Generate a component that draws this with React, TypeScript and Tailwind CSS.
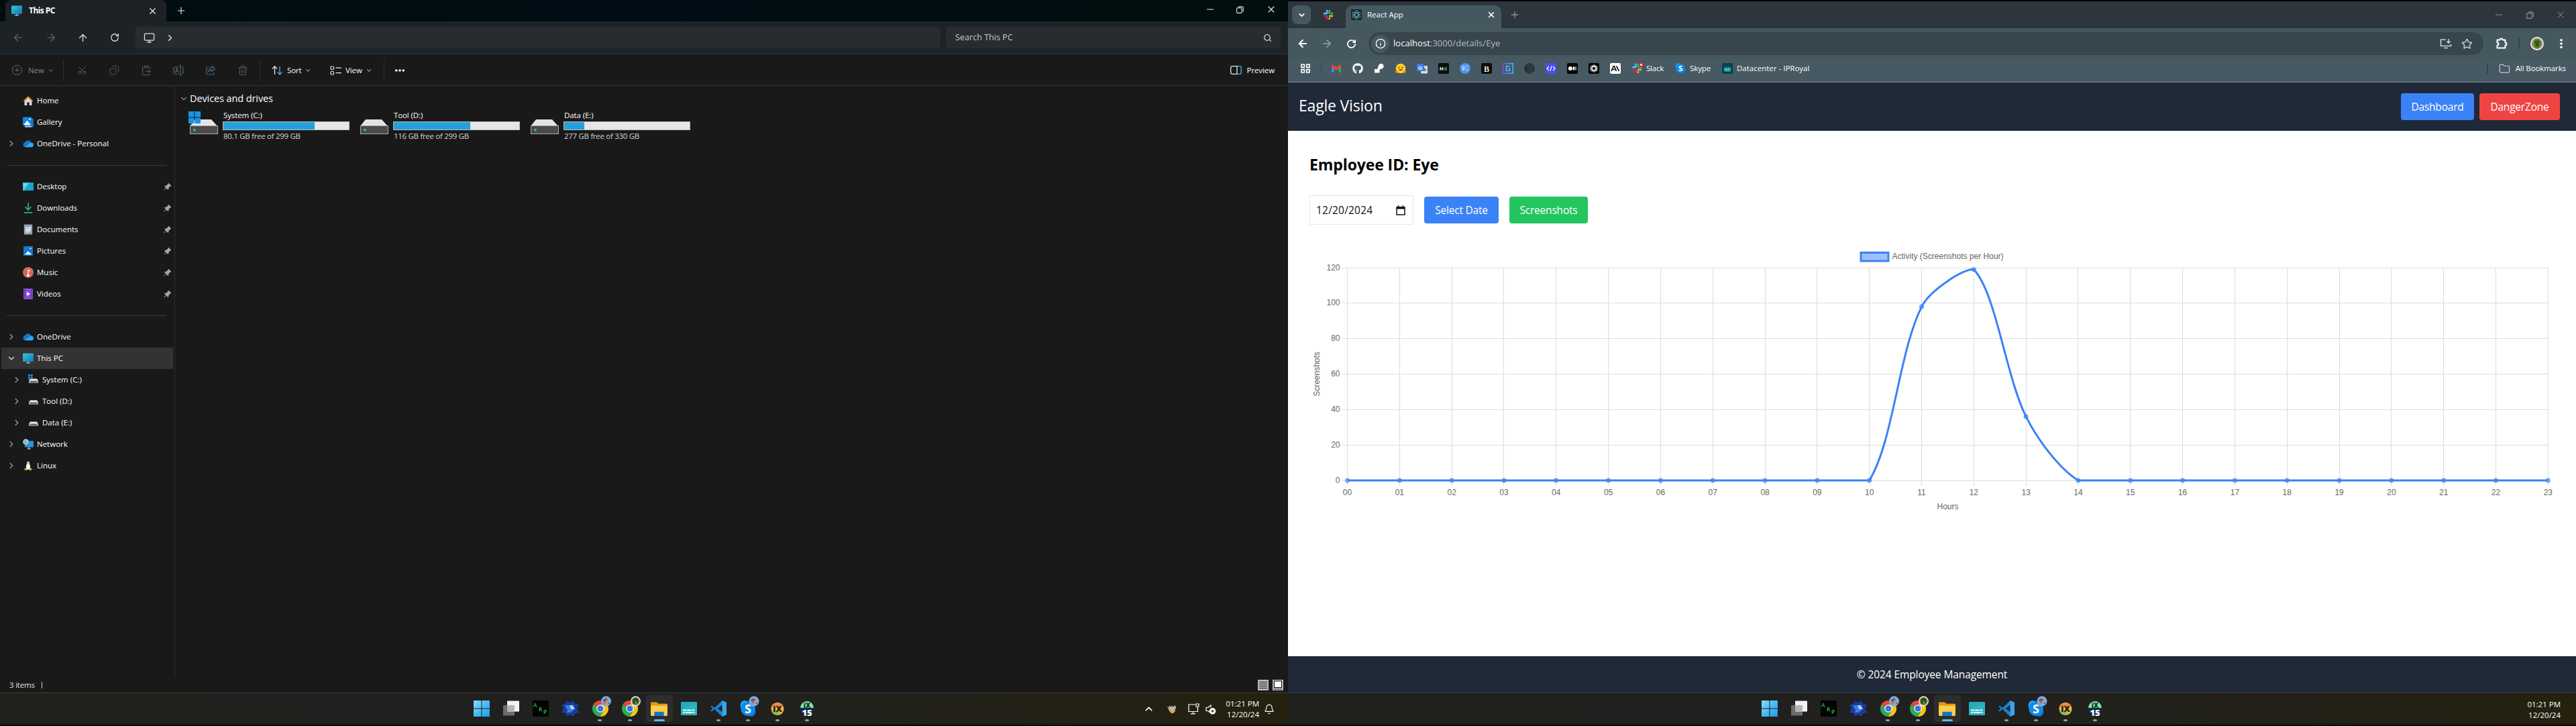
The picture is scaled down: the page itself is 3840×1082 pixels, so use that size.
import React from "react";
import { FaGithub } from "react-icons/fa";
import {
  ArrowLeft, ArrowRight, ArrowUp, RotateCw, Monitor, ChevronRight, ChevronDown, ChevronUp, X, Plus, Minus,
  Scissors, Copy, ClipboardPaste, Trash2, Search, Ellipsis, Star, Folder, Bell,
  EllipsisVertical, CirclePlus, Info,
} from "lucide-react";

type P = { children?: React.ReactNode; className?: string };

const Cell = ({ children, className = "" }: P) => (
  <div className={"flex shrink-0 items-center justify-center " + className}>{children}</div>
);

/* ---------- shared glyphs ---------- */

const RestoreIcon = () => (
  <svg width="11" height="11" viewBox="0 0 11 11" fill="none" stroke="currentColor" strokeWidth="1.1">
    <rect x="0.6" y="2.6" width="7.6" height="7.8" rx="1.4" />
    <path d="M2.8 0.8H8a2.3 2.3 0 0 1 2.3 2.3V8.4" />
  </svg>
);

const MonitorIcon = ({ size = 16 }: { size?: number }) => (
  <svg width={size} height={size} viewBox="0 0 16 16">
    <defs>
      <linearGradient id="mon" x1="0" y1="0" x2="1" y2="1">
        <stop offset="0" stopColor="#37c9d6" />
        <stop offset="1" stopColor="#1273b8" />
      </linearGradient>
    </defs>
    <rect x="0" y="0.5" width="16" height="12.5" rx="0.8" fill="url(#mon)" />
    <path d="M7.2 13h1.6v1.6h2.6v1H4.6v-1h2.6z" fill="#a9d9ea" />
  </svg>
);

const CloudIcon = () => (
  <svg width="16" height="16" viewBox="0 0 16 16">
    <path d="M4 13.2a3.7 3.7 0 0 1-.6-7.3A5 5 0 0 1 12.6 6.6a3.3 3.3 0 0 1 .2 6.6z" fill="#0f7ad0" />
    <path d="M3 13.2l7.5-5.8c2-1 5.3 0 5.3 2.9a3 3 0 0 1-3 2.9z" fill="#35a8ee" />
  </svg>
);

const HomeIcon = () => (
  <svg width="16" height="16" viewBox="0 0 16 16">
    <path d="M2.5 7L8 2l5.5 5v8H9.7v-4.5H6.3V15H2.5z" fill="#d8d8d8" />
    <path d="M0.8 8.3L8 1.2l7.2 7.1-1.3 1.2L8 3.9 2.1 9.5z" fill="#e88a2c" />
  </svg>
);

const GalleryIcon = () => (
  <svg width="16" height="16" viewBox="0 0 16 16">
    <rect x="3" y="2.5" width="13" height="13" rx="1" fill="#1f6fc0" />
    <rect x="0" y="0.5" width="13.5" height="12.5" rx="1" fill="#1287e0" />
    <path d="M1 12.5l5.5-7 5.5 7z" fill="#f2f8ff" />
    <circle cx="10.5" cy="3.6" r="1.2" fill="#fff" />
    <path d="M3 14h10v1.5H3z" fill="#c9e2f8" />
  </svg>
);

const DesktopIcon = () => (
  <svg width="16" height="16" viewBox="0 0 16 16">
    <rect x="0" y="2" width="16" height="12" rx="1" fill="#1aa5cf" />
    <path d="M0 3a1 1 0 0 1 1-1h9L2 14H1a1 1 0 0 1-1-1z" fill="#3fc6e4" />
    <path d="M1.5 4h1.5v1.5H1.5zM1.5 7h1.5v1.5H1.5zM4.5 4H6v1.5H4.5z" fill="#e8fbff" />
  </svg>
);

const DownloadIcon = () => (
  <svg width="16" height="16" viewBox="0 0 16 16" fill="none" stroke="#27b183" strokeWidth="1.7">
    <path d="M8 0v10.5M3.5 6.3L8 10.7l4.5-4.4M2 14.8h12" />
  </svg>
);

const DocIcon = () => (
  <svg width="16" height="16" viewBox="0 0 16 16">
    <rect x="1.8" y="0.5" width="12.4" height="15" rx="0.8" fill="#93a5b8" />
    <path d="M4 5h5v1H4zM4 7h8v1.2H4zM4 9.3h8v1.2H4zM9.5 4H12v2.2H9.5z" fill="#fff" />
    <path d="M4 11.5h6v1H4z" fill="#e3ebf2" />
  </svg>
);

const PictureIcon = () => (
  <svg width="16" height="16" viewBox="0 0 16 16">
    <rect x="1" y="1" width="14" height="14" rx="1" fill="#1878cc" />
    <path d="M2.5 13.5L8 8.2l5.5 5.3z" fill="#e6f4ff" />
    <circle cx="11.5" cy="4.3" r="1.1" fill="#fff" />
  </svg>
);

const MusicIcon = () => (
  <svg width="16" height="16" viewBox="0 0 16 16">
    <circle cx="8" cy="8" r="8" fill="#d0695c" />
    <path d="M7.5 10.8V3.8l3.3.8v1.7l-2-.5v5.2a1.8 1.8 0 1 1-1.3-.2z" fill="#fff" />
  </svg>
);

const VideoIcon = () => (
  <svg width="16" height="16" viewBox="0 0 16 16">
    <rect x="1" y="0" width="14" height="16" rx="1" fill="#8a4fd3" />
    <path d="M2 2h1.5v1.5H2zM2 5.5h1.5V7H2zM2 9h1.5v1.5H2zM2 12.5h1.5V14H2zM12.5 2H14v1.5h-1.5zM12.5 5.5H14V7h-1.5zM12.5 9H14v1.5h-1.5zM12.5 12.5H14V14h-1.5z" fill="#3c1d77" />
    <path d="M6 5l5 3-5 3z" fill="#fff" />
  </svg>
);

const SmallDrive = ({ win = false }: { win?: boolean }) => (
  <svg width="16" height="16" viewBox="0 0 16 16">
    <path d="M3 6.5h10l2 3H1z" fill="#e8e8e8" />
    <rect x="1" y="9.3" width="14" height="3.4" rx="0.5" fill="#b9bcc0" />
    <rect x="2.5" y="10.4" width="11" height="1.3" fill="#3b3b3b" />
    {win && <path d="M0 0h3v3H0zM3.7 0h3v3h-3zM0 3.7h3v3H0zM3.7 3.7h3v3h-3z" fill="#1d8be0" />}
  </svg>
);

const NetworkIcon = () => (
  <svg width="16" height="16" viewBox="0 0 16 16">
    <rect x="3" y="3" width="13" height="9.5" rx="0.8" fill="#2795d3" />
    <path d="M8.5 12.5H10v2h2v1H6.5v-1h2z" fill="#a9d9ea" />
    <circle cx="4.5" cy="4.5" r="4.3" fill="#a9cfe0" />
    <path d="M2 2.5c2 0 2 2 4 1.5M2 6c2-1 3 1 5-.5" stroke="#3b87a8" fill="none" />
  </svg>
);

const LinuxIcon = () => (
  <svg width="16" height="16" viewBox="0 0 16 16">
    <ellipse cx="8" cy="9" rx="4" ry="6" fill="#111" />
    <circle cx="8" cy="4" r="2.3" fill="#c9c9c9" />
    <ellipse cx="8" cy="9.5" rx="3.2" ry="4.6" fill="#f4f4f4" />
    <path d="M6.8 4.2h2.4L8 5.8z" fill="#e8b923" />
    <path d="M1.8 13.5l2.3-2.2 2.7 3L5 15.5zM14.2 13.5l-2.3-2.2-2.7 3 1.8 1.2z" fill="#c9b23a" />
  </svg>
);

const PinIcon = () => (
  <svg width="12" height="12" viewBox="0 0 12 12" fill="#a6a6a6">
    <path d="M7.3 0.8l4 4-1 .9-.6-.1L7.5 8l-.3 2.3-.9.7-2.4-2.4-2.9 3-.7-.6 3-3L1 5.8l.7-.9 2.5-.3 2.3-2.3-.1-.6z" />
  </svg>
);

const SlackIcon = ({ size = 16 }: { size?: number }) => (
  <svg width={size} height={size} viewBox="0 0 16 16" strokeWidth="2.7" strokeLinecap="round">
    <path d="M6.2 1.8v4M2 6.2h3.8" stroke="#36c5f0" />
    <path d="M9.8 2v3.8M14 6.2h-1" stroke="#2eb67d" />
    <path d="M9.8 14v-1M10.2 9.8H14" stroke="#ecb22e" />
    <path d="M6.2 14v-3.8M2 9.8h1" stroke="#e01e5a" />
  </svg>
);

const SkypeIcon = ({ size = 16 }: { size?: number }) => (
  <svg width={size} height={size} viewBox="0 0 24 24">
    <circle cx="7.5" cy="7.5" r="7" fill="#1a9cf0" />
    <circle cx="16.5" cy="16.5" r="7" fill="#0a6fd6" />
    <circle cx="12" cy="12" r="10" fill="#0f8ce9" />
    <text x="12" y="18" textAnchor="middle" fontFamily="Open Sans, sans-serif" fontSize="17" fontWeight="700" fill="#fff">S</text>
  </svg>
);

const ExtensionIcon = () => (
  <svg width="17" height="17" viewBox="0 0 17 17" fill="none" stroke="#fff" strokeWidth="2" strokeLinejoin="round">
    <path d="M1.5 3.5H5.6a2 2 0 0 1 4 0H13.5V7.6a2 2 0 0 1 0 4V15.5H1.5V11.6a2 2 0 0 0 0-4z" />
  </svg>
);

const BigDrive = ({ win = false }: { win?: boolean }) => (
  <svg width="46" height="38" viewBox="0 0 46 38">
    <path d="M10 14h24l9 10H2z" fill="#e4e4e4" />
    <rect x="2.5" y="23.5" width="41" height="12" fill="#4b4b4b" stroke="#a9a9a9" />
    <circle cx="9" cy="29.5" r="1.8" fill="#3fd04a" />
    {win && <path d="M0 2h8.5v8.5H0zM9.5 2H18v8.5H9.5zM0 11.5h8.5V20H0zM9.5 11.5H18V20H9.5z" fill="#1996e6" />}
  </svg>
);

/* ---------- file explorer ---------- */

type Item = { label: string; icon: React.ReactNode; chev?: "r" | "d"; pin?: boolean; child?: boolean; active?: boolean };

const quick: Item[] = [
  { label: "Home", icon: <HomeIcon /> },
  { label: "Gallery", icon: <GalleryIcon /> },
  { label: "OneDrive - Personal", icon: <CloudIcon />, chev: "r" },
];
const pinned: Item[] = [
  { label: "Desktop", icon: <DesktopIcon />, pin: true },
  { label: "Downloads", icon: <DownloadIcon />, pin: true },
  { label: "Documents", icon: <DocIcon />, pin: true },
  { label: "Pictures", icon: <PictureIcon />, pin: true },
  { label: "Music", icon: <MusicIcon />, pin: true },
  { label: "Videos", icon: <VideoIcon />, pin: true },
];
const tree: Item[] = [
  { label: "OneDrive", icon: <CloudIcon />, chev: "r" },
  { label: "This PC", icon: <MonitorIcon />, chev: "d", active: true },
  { label: "System (C:)", icon: <SmallDrive win />, chev: "r", child: true },
  { label: "Tool (D:)", icon: <SmallDrive />, chev: "r", child: true },
  { label: "Data (E:)", icon: <SmallDrive />, chev: "r", child: true },
  { label: "Network", icon: <NetworkIcon />, chev: "r" },
  { label: "Linux", icon: <LinuxIcon />, chev: "r" },
];

const Row = ({ it }: { it: Item }) => (
  <div className={"ml-[2px] flex h-8 w-64 items-center pr-[2px] " + (it.active ? "bg-[#333333]" : "")}>
    <Cell className={it.child ? "ml-[15px] mr-[9px] w-4" : "ml-[7px] mr-[9px] w-4"}>
      {it.chev === "r" && <ChevronRight size={14} color="#9a9a9a" strokeWidth={2.3} />}
      {it.chev === "d" && <ChevronDown size={14} color="#d6d6d6" strokeWidth={2.3} />}
    </Cell>
    {it.icon}
    <span className="ml-[5px] grow text-[11.5px] text-white">{it.label}</span>
    {it.pin && <PinIcon />}
  </div>
);

const Divider = () => (
  <div className="flex h-8 items-center pl-[10px]">
    <div className="h-px w-[238px] bg-[#3a3a3a]" />
  </div>
);

const drives = [
  { name: "System (C:)", free: "80.1 GB free of 299 GB", fill: "w-[136px]", win: true },
  { name: "Tool (D:)", free: "116 GB free of 299 GB", fill: "w-[114px]", win: false },
  { name: "Data (E:)", free: "277 GB free of 330 GB", fill: "w-[30px]", win: false },
];

const Sep = ({ className = "" }: P) => <div className={"h-8 w-px shrink-0 bg-[#2e2e2e] " + className} />;

const Explorer = () => (
  <div className="flex h-[1032px] flex-col bg-[#191919]">
    <div className="flex h-8 bg-linear-to-r from-[#000d0d] via-[#020c15] to-[#000e0d] pl-2 text-[#e8e8e8]">
      <div className="flex w-[240px] items-center rounded-t-lg bg-[#1c2125] pl-[9px] pr-[13px]">
        <MonitorIcon />
        <span className="ml-[10px] grow text-[12px] font-bold tracking-[-0.55px] text-white">This PC</span>
        <X size={15} strokeWidth={1.9} />
      </div>
      <Cell className="ml-[14px] w-4"><Plus size={16} strokeWidth={1.7} /></Cell>
      <div className="ml-auto flex h-7 items-center">
        <Cell className="w-[45px]"><Minus size={16} strokeWidth={1.8} /></Cell>
        <Cell className="w-[45px]"><RestoreIcon /></Cell>
        <Cell className="w-[47px]"><X size={16} strokeWidth={1.7} /></Cell>
        <div className="w-[2px]" />
      </div>
    </div>
    <div className="flex h-12 items-center bg-[#1d2226] pr-[11px] text-[#e2e2e2]">
      <Cell className="ml-1 w-[45px]"><ArrowLeft size={18} strokeWidth={1.5} color="#666a6c" /></Cell>
      <Cell className="w-[53px]"><ArrowRight size={18} strokeWidth={1.5} color="#666a6c" /></Cell>
      <Cell className="w-[42px]"><ArrowUp size={17} strokeWidth={1.8} /></Cell>
      <Cell className="w-[54px]"><RotateCw size={14} strokeWidth={2.2} /></Cell>
      <div className="ml-1 flex h-8 grow items-center rounded bg-[#272c30]">
        <Cell className="ml-[11px] w-[18px]"><Monitor size={17} strokeWidth={1.8} /></Cell>
        <Cell className="ml-[14px] w-4"><ChevronRight size={15} strokeWidth={2.3} /></Cell>
      </div>
      <div className="ml-2 flex h-8 w-[499px] items-center justify-between rounded bg-[#272c30] pl-[14px] pr-[13px] text-[#c9cbcd]">
        <span className="text-[12.5px] tracking-[0.05px]">Search This PC</span>
        <Search size={13} strokeWidth={2.6} />
      </div>
    </div>
    <div className="flex h-12 items-center border-y border-[#343434] pt-px text-[11.5px] tracking-[-0.1px] text-white">
      <Cell className="ml-4 w-[18px] text-[#6a6a6a]"><CirclePlus size={17} strokeWidth={1.4} /></Cell>
      <span className="ml-2 w-[27px] text-[#858585]">New</span>
      <ChevronDown size={10} className="ml-[2px]" color="#777" strokeWidth={2.5} />
      <Sep className="ml-[13px]" />
      <div className="flex w-[292px] items-center pl-[3px] text-[#5b6368]">
        <Cell className="w-12"><Scissors size={15} strokeWidth={1.5} className="-rotate-90 text-[#456a80]" /></Cell>
        <Cell className="w-12"><Copy size={15} strokeWidth={1.5} className="-scale-x-100 text-[#456073]" /></Cell>
        <Cell className="w-12"><ClipboardPaste size={16} strokeWidth={1.5} /></Cell>
        <Cell className="w-12">
          <svg width="16" height="16" viewBox="0 0 16 16" fill="none" stroke="#536470" strokeWidth="1.2">
            <path d="M9 3H2.5A1.5 1.5 0 0 0 1 4.5v7A1.5 1.5 0 0 0 2.5 13H9M13 3.2a1.5 1.5 0 0 1 2 1.3v7a1.5 1.5 0 0 1-2 1.3M11 .8v14.4M9.5 .8h3M9.5 15.2h3M3.5 11l2.2-6 2.2 6M4.3 9h2.8" />
          </svg>
        </Cell>
        <Cell className="w-12">
          <svg width="16" height="16" viewBox="0 0 16 16" fill="none" stroke="#48687a" strokeWidth="1.2">
            <path d="M6 3H3.5A1.5 1.5 0 0 0 2 4.5v8A1.5 1.5 0 0 0 3.5 14h8a1.5 1.5 0 0 0 1.5-1.5V11M10 1.500l4.500 4-4.500 4V7.300C7.500 7.200 6 8.300 5 10c.2-3.500 2-5.700 5-6z" />
          </svg>
        </Cell>
        <Cell className="w-12"><Trash2 size={16} strokeWidth={1.4} color="#666" /></Cell>
      </div>
      <Sep />
      <Cell className="ml-4 w-[18px]">
        <svg width="17" height="14" viewBox="0 0 17 14" fill="none" strokeWidth="1.3">
          <path d="M4.5 13V1M1 4.5L4.5 1 8 4.5" stroke="#e8e8e8" />
          <path d="M12 1v12M8.5 9.5L12 13l3.5-3.5" stroke="#4cb2e8" />
        </svg>
      </Cell>
      <span className="ml-[6px] w-[26px]">Sort</span>
      <ChevronDown size={10} color="#bbb" strokeWidth={2.5} />
      <Cell className="ml-[27px] w-[18px]">
        <svg width="17" height="14" viewBox="0 0 17 14" fill="none" stroke="#e8e8e8" strokeWidth="1.2">
          <rect x="1" y="1" width="4.5" height="4.5" rx="1.3" />
          <rect x="1" y="8.5" width="4.5" height="4.5" rx="1.3" />
          <path d="M8.5 3.2H17M8.5 10.7H17" />
        </svg>
      </Cell>
      <span className="ml-[6px] w-[30px]">View</span>
      <ChevronDown size={10} color="#bbb" strokeWidth={2.5} />
      <Sep className="ml-[17px]" />
      <Cell className="ml-[14px] w-[18px]"><Ellipsis size={20} strokeWidth={2.8} /></Cell>
      <div className="ml-auto flex items-center gap-2 pr-[20px]">
        <svg width="17" height="13" viewBox="0 0 17 13" fill="none" strokeWidth="1.3">
          <path d="M10 .7H3A2.2 2.2 0 0 0 .7 2.9v7.2A2.2 2.2 0 0 0 3 12.3h7z" stroke="#e8e8e8" />
          <path d="M10 .7h4a2.2 2.2 0 0 1 2.2 2.2v7.2a2.2 2.2 0 0 1-2.2 2.2h-4" stroke="#4cb2e8" />
        </svg>
        <span>Preview</span>
      </div>
    </div>
    <div className="flex grow">
      <div className="w-[261px] border-r border-[#2d2d2d] pt-[6px]">
        {quick.map((it) => <Row key={it.label} it={it} />)}
        <Divider />
        {pinned.map((it) => <Row key={it.label} it={it} />)}
        <Divider />
        {tree.map((it) => <Row key={it.label} it={it} />)}
      </div>
      <div className="grow">
        <div className="mt-[7px] flex h-6 items-center pl-[6px] text-[14.5px] tracking-[-0.1px] text-white">
          <ChevronDown size={14} color="#bbb" strokeWidth={1.8} className="mr-[2px]" />
          Devices and drives
        </div>
        <div className="mt-[5px] flex pl-[20px]">
          {drives.map((d) => (
            <div key={d.name} className="flex w-[254px]">
              <div className="mr-[5px] w-[46px]"><BigDrive win={d.win} /></div>
              <div className="text-[11.5px] leading-[16px] tracking-[-0.1px] text-white">
                <div className="h-[17px] pl-px">{d.name}</div>
                <div className="flex h-[13px] w-[189px] border border-[#bcbcbc] bg-[#e6e6e6]">
                  <div className={"bg-[#26a0da] " + d.fill} />
                </div>
                <div className="pl-px pt-px tracking-[-0.3px] text-[#d5d5d5]">{d.free}</div>
              </div>
            </div>
          ))}
        </div>
      </div>
    </div>
    <div className="flex h-[22px] shrink-0 items-center pl-[14px] pr-[7px] text-[11.5px] tracking-[-0.2px] text-[#e0e0e0]">
      3 items
      <div className="ml-[10px] h-[10px] w-px bg-[#cfcfcf]" />
      <svg className="ml-auto" width="16" height="16" viewBox="0 0 16 16">
        <rect width="16" height="16" fill="#b8b8b8" />
        <path d="M2 3.5h12M2 6.5h12M2 9.5h12M2 12.5h12" stroke="#1c1c1c" />
      </svg>
      <svg className="ml-[6px]" width="16" height="16" viewBox="0 0 16 16">
        <rect width="16" height="16" fill="#b8b8b8" />
        <rect x="2.5" y="2" width="11" height="9.5" fill="#fff" stroke="#111" />
        <path d="M2 14h12" stroke="#333" />
      </svg>
    </div>
  </div>
);

/* ---------- taskbar ---------- */

const Badge = ({ x, y }: { x: number; y: number }) => (
  <g transform={`translate(${x},${y})`}>
    <circle r="7.5" fill="#7fb0e6" />
    <path d="M-5 4.5L1-5 4-3-1 5z" fill="#d9773f" />
    <path d="M-5-2l5-3 1 3-4 4zM2 3l4-2-2 4z" fill="#3a62b8" />
  </g>
);

const Chrome = ({ badge }: { badge: "blue" | "green" }) => (
  <svg width="30" height="34" viewBox="0 0 30 34" className="-mt-[10px] ml-[5px] shrink-0">
    <g transform="translate(1,10)">
      <circle cx="12" cy="12" r="12" fill="#34a853" />
      <path d="M12 0A12 12 0 0 1 22.4 6L12 12 1.6 6A12 12 0 0 1 12 0z" fill="#ea4335" />
      <path d="M12 6h10.4A12 12 0 0 1 12 24l5.2-9z" fill="#fbc116" />
      <circle cx="12" cy="12" r="5.8" fill="#fff" />
      <circle cx="12" cy="12" r="4.5" fill="#2f78e8" />
    </g>
    {badge === "blue" ? <Badge x={21.5} y={11} /> : (
      <g>
        <circle cx="21.5" cy="11" r="7.5" fill="#eee" />
        <circle cx="21.5" cy="11" r="6" fill="#5e7c3a" />
        <path d="M18 10a3.5 3.5 0 0 1 7 0v3h-2v-3h-3v5h-2z" fill="#2d3b1c" />
      </g>
    )}
  </svg>
);

const apps: { key: string; icon: React.ReactNode; run?: boolean; active?: boolean }[] = [
  { key: "start", icon: (
    <svg width="24" height="24" viewBox="0 0 24 24">
      <defs><linearGradient id="st" x1="0" y1="0" x2="1" y2="1"><stop offset="0" stopColor="#7fdcfb" /><stop offset="1" stopColor="#1b9cea" /></linearGradient></defs>
      <path d="M0 0h11.5v11.5H0zM12.5 0H24v11.5H12.5zM0 12.5h11.5V24H0zM12.5 12.5H24V24H12.5z" fill="url(#st)" />
    </svg>) },
  { key: "view", icon: (
    <svg width="24" height="24" viewBox="0 0 24 24">
      <rect x="0" y="7" width="17" height="15.5" rx="1" fill="#6c6c6c" />
      <rect x="6" y="0.5" width="18" height="16" rx="1" fill="#f2f2f2" />
      <rect x="6" y="7" width="11" height="9.5" fill="#b5b5b5" />
    </svg>) },
  { key: "akp", icon: (
    <svg width="24" height="24" viewBox="0 0 24 24">
      <rect width="24" height="24" fill="#020302" />
      <g fontFamily="Liberation Mono, monospace" fontWeight="700" fontSize="9" fill="#2aa336">
        <text x="1" y="10">A</text><text x="9" y="16">K</text><text x="16" y="20">P</text>
      </g>
    </svg>) },
  { key: "fl", icon: (
    <svg width="26" height="24" viewBox="0 0 26 24">
      <path d="M8 0l5 3 5-3 2 5 6 1-3 6 3 6-6 1-2 5-5-3-5 3-2-5-6-1 3-6-3-6 6-1z" fill="#173c9c" />
      <path d="M5 7h8l4 5-4 1H8zM10 13h9l-5 5H7z" fill="#3f78e6" />
      <path d="M12 7h5l3 6h-6z" fill="#a9c8ff" />
    </svg>) },
  { key: "chrome1", icon: <Chrome badge="blue" />, run: true },
  { key: "chrome2", icon: <Chrome badge="green" />, run: true },
  { key: "files", active: true, icon: (
    <svg width="25" height="23" viewBox="0 0 26 24">
      <path d="M0 3a1.5 1.5 0 0 1 1.5-1.5H9L12 4h12.5A1.5 1.5 0 0 1 26 5.5V10H0z" fill="#e89a13" />
      <path d="M0 7h26v14.5a1.5 1.5 0 0 1-1.5 1.5h-23A1.5 1.5 0 0 1 0 21.5z" fill="#fbce4a" />
      <path d="M5.5 23v-5a1.5 1.5 0 0 1 1.5-1.5h12a1.5 1.5 0 0 1 1.5 1.5v5z" fill="#1374c8" />
    </svg>) },
  { key: "kbd", icon: (
    <svg width="24" height="20" viewBox="0 0 24 20">
      <rect width="24" height="20" rx="1.5" fill="#28a9b9" />
      <path d="M0 12L24 0v18.5a1.5 1.5 0 0 1-1.5 1.5h-21A1.5 1.5 0 0 1 0 18.5z" fill="#2fbcc4" opacity=".6" />
      <path d="M3 12.5h5M9 12.5h6M16 12.5h4M3 16h2.5M6.5 16h11M18.5 16h2" stroke="#eaffff" strokeWidth="1.8" />
    </svg>) },
  { key: "code", run: true, icon: (
    <svg width="24" height="24" viewBox="0 0 24 24">
      <path d="M17.5 0L24 3v18l-6.5 3L6 13l-4 3.5L0 15.3 3.5 12 0 8.7l2-1.2L6 11z" fill="#1b80cc" />
      <path d="M17.5 0L24 3v18l-6.5 3z" fill="#39a5ee" />
      <path d="M17.5 7v10L11 12z" fill="#202020" />
    </svg>) },
  { key: "skype", run: true, icon: (
    <svg width="30" height="34" viewBox="0 0 30 34" className="-mt-[10px] ml-[5px] shrink-0">
      <circle cx="8.5" cy="17" r="7" fill="#30a8f4" />
      <circle cx="17.5" cy="27" r="7" fill="#0a6fd6" />
      <circle cx="13" cy="22" r="10.8" fill="#0f8ce9" />
      <text x="13" y="28.5" textAnchor="middle" fontFamily="Open Sans, sans-serif" fontSize="18" fontWeight="700" fill="#fff">S</text>
      <Badge x={22} y={11} />
    </svg>) },
  { key: "ix", run: true, icon: (
    <svg width="20" height="21" viewBox="0 0 22 22">
      <circle cx="11" cy="11" r="10.5" fill="#e7b53a" />
      <path d="M11 .5A10.5 10.5 0 0 0 1 8h11l8-2A10.5 10.5 0 0 0 11 .5z" fill="#ee8a4c" />
      <path d="M1 14a10.5 10.5 0 0 0 14 6.5L9 14z" fill="#7dbf5a" />
      <text x="11" y="16" textAnchor="middle" fontFamily="Open Sans, sans-serif" fontSize="14" fontWeight="800" fill="#191919">iX</text>
    </svg>) },
  { key: "ix15", run: true, icon: (
    <svg width="22" height="26" viewBox="0 0 22 26">
      <path d="M1 12a10 10 0 0 1 20 0z" fill="#7fe3a0" />
      <path d="M1 12h20a10 12 0 0 1-20 0z" fill="#0e2a4d" />
      <text x="11" y="12" textAnchor="middle" fontFamily="Open Sans, sans-serif" fontSize="10" fontWeight="800" fill="#14301f">iX</text>
      <text x="11" y="23.5" textAnchor="middle" fontFamily="Open Sans, sans-serif" fontSize="13" fontWeight="800" fill="#fff">15</text>
    </svg>) },
];

const Clock = () => (
  <div className="text-right text-[11.5px] leading-[16px] text-white">
    <div>01:21 PM</div>
    <div>12/20/24</div>
  </div>
);

const Taskbar = ({ tray }: { tray?: boolean }) => (
  <div className="flex h-[50px] w-[1920px] items-center border-b-2 border-t border-b-black border-t-[#3c3c3c] bg-linear-to-r from-[#20211c] via-[#202020] to-[#24210f]">
    <div className="ml-[696px] flex h-full">
      {apps.map((a) => (
        <div key={a.key} className="flex w-[44.1px] flex-col items-center pt-[3px]">
          <Cell className={"h-10 w-10 overflow-visible rounded " + (a.active ? "bg-[#2d2d2d]" : "")}>{a.icon}</Cell>
          {a.run && <div className="-mt-[4px] h-[3px] w-[6px] rounded-full bg-[#9a9a9a]" />}
          {a.active && <div className="-mt-[4px] h-[3px] w-4 rounded-full bg-[#5db8f0]" />}
        </div>
      ))}
    </div>
    {tray ? (
      <div className="ml-auto flex items-center pr-[20px] text-white">
        <ChevronUp size={17} strokeWidth={2.2} />
        <svg className="ml-[18px]" width="16" height="14" viewBox="0 0 16 14">
          <path d="M4 1l2 2.500L8 2l2 1.500L13 1l1 4-2 4H6L4 7z" fill="#b4b6c4" />
          <path d="M1 3l2.500 1L5 8l3 1 4-1 1 2-3 3H7l-3-3.500z" fill="#d2b23c" />
        </svg>
        <svg className="ml-[16px]" width="17" height="17" viewBox="0 0 17 17" fill="none" stroke="#fff" strokeWidth="1.2">
          <path d="M11 2H1v10.5h13.5V7M4 15.8h7M7.5 12.5v3M12 1h4v4h-4zM14 5v3" />
        </svg>
        <svg className="ml-[9px]" width="16" height="16" viewBox="0 0 16 16" fill="none" stroke="#fff" strokeWidth="1.2">
          <path d="M4 10.5H1v-5h3L8 2v3M4 10.5l2 2" />
          <circle cx="10.5" cy="10.8" r="4.2" fill="#fff" />
          <path d="M8.9 9.2l3.2 3.2M12.1 9.2l-3.2 3.2" stroke="#202020" />
        </svg>
        <div className="ml-[14px]"><Clock /></div>
        <Bell size={16} strokeWidth={1.7} className="ml-[7px]" />
      </div>
    ) : (
      <div className="ml-auto pr-[23px] pt-[2px]"><Clock /></div>
    )}
  </div>
);

/* ---------- browser ---------- */

const Tile = ({ bg, children }: { bg: string; children?: React.ReactNode }) => (
  <svg width="16" height="16" viewBox="0 0 16 16">
    <rect width="16" height="16" rx="2" fill={bg} />
    {children}
  </svg>
);

const bold = { fontFamily: "Liberation Sans, sans-serif", fontWeight: 700, textAnchor: "middle" as const };

const bookmarks: React.ReactNode[] = [
  <svg width="16" height="16" viewBox="0 0 16 16">
    <path d="M1 14V4l3.5 2.6V14z" fill="#4285f4" />
    <path d="M15 14V4l-3.5 2.6V14z" fill="#34a853" />
    <path d="M1 5.500V3.800C1 2.500 2.500 2 3.500 2.800L8 6.300l4.500-3.500C13.500 2 15 2.500 15 3.800v1.700L8 11z" fill="#ea4335" />
  </svg>,
  <FaGithub size={16} color="#fff" />,
  <svg width="16" height="16" viewBox="0 0 16 16" fill="#fff">
    <path d="M1 9h4l2-5a3.800 3.800 0 1 1 4 4.500L8.500 10v4.500H1z" />
  </svg>,
  <svg width="16" height="16" viewBox="0 0 16 16">
    <circle cx="8" cy="8" r="7.3" fill="#ffd21e" />
    <path d="M0 14c0-3 3-4 4-2l1 2.5H1zM16 14c0-3-3-4-4-2l-1 2.500h4z" fill="#ff9d0b" />
    <circle cx="5.5" cy="6.5" r="1" fill="#333" /><circle cx="10.5" cy="6.5" r="1" fill="#333" />
    <path d="M5 9h6c-.5 3-5.500 3-6 0z" fill="#a33" />
  </svg>,
  <svg width="16" height="16" viewBox="0 0 16 16">
    <rect x="6" y="4" width="10" height="11.5" rx="1" fill="#d8dce0" />
    <path d="M0 1h9.5l3.5 11H1a1 1 0 0 1-1-1z" fill="#3f7de0" />
    <text x="5" y="9.5" fontSize="8" fill="#fff" {...bold}>G</text>
    <path d="M11 9.5h4M13 8.5v1c0 1.5-.5 2.5-1 3" stroke="#5d7aa8" fill="none" />
  </svg>,
  <Tile bg="#0b0d0c">
    <text x="5" y="11" fontSize="8" fill="#fff" {...bold}>H</text>
    <text x="11" y="11" fontSize="8" fill="#1fb561" {...bold}>8</text>
  </Tile>,
  <svg width="16" height="16" viewBox="0 0 16 16">
    <circle cx="8" cy="8" r="8" fill="#4b97ea" />
    <path d="M3 5l2 6M5.5 4v7M8 4l-1 4 2 3M10 4.5h3M10 8h2.5M10 11h3" stroke="#cfe4ff" fill="none" />
  </svg>,
  <Tile bg="#0c0c0c"><text x="8" y="12.5" fontSize="12" fill="#f1e2cb" {...bold} fontFamily="Liberation Serif, serif">B</text></Tile>,
  <svg width="16" height="16" viewBox="0 0 16 16">
    <defs><linearGradient id="gg" x1="0" x2="1"><stop offset="0" stopColor="#7a4fd8" /><stop offset="1" stopColor="#49c7e8" /></linearGradient></defs>
    <rect x=".7" y=".7" width="14.6" height="14.6" fill="#3f5a86" stroke="url(#gg)" strokeWidth="1.4" />
    <path d="M11 4.5H5.5v7h5V8H8" stroke="#6fd0f0" fill="none" strokeWidth="1.2" />
  </svg>,
  <svg width="16" height="16" viewBox="0 0 16 16" fill="none" stroke="#1d262b">
    <circle cx="8" cy="8" r="7.3" fill="#36454c" />
    <path d="M8 1v14M2 5h6M1 8h7M2 11h6M10 3c2 2 2 8 0 10M12.5 3.5c2 3 2 6 0 9M4 3v10" />
  </svg>,
  <Tile bg="#4a4ff0"><path d="M5 5L2 8l3 3M11 5l3 3-3 3M9 4.5L7 11.5" stroke="#fff" fill="none" strokeWidth="1.2" /></Tile>,
  <Tile bg="#050505"><circle cx="4.8" cy="8" r="3" fill="#fff" /><ellipse cx="10" cy="8" rx="1.5" ry="2.9" fill="#fff" /><path d="M13 5.3v5.4" stroke="#fff" strokeWidth="1.2" /></Tile>,
  <Tile bg="#050505">
    <g fill="none" stroke="#fff" strokeWidth="0.9">
      <ellipse cx="8" cy="8" rx="2.6" ry="5.3" />
      <ellipse cx="8" cy="8" rx="2.6" ry="5.3" transform="rotate(60 8 8)" />
      <ellipse cx="8" cy="8" rx="2.6" ry="5.3" transform="rotate(120 8 8)" />
    </g>
  </Tile>,
  <Tile bg="#fff"><path d="M2 12L5.3 4.5h1L9.5 12M3.5 9.5h4.7M9.5 4.5L13.5 12" stroke="#151515" fill="none" strokeWidth="1.7" /></Tile>,
];

const Browser = () => (
  <div className="flex h-[1032px] flex-col bg-white">
    <div className="h-[2px] shrink-0 bg-black" />
    <div className="flex h-10 shrink-0 items-end bg-[#2d363d] pl-[6px] text-white">
      <Cell className="mb-[6px] h-7 w-7 rounded-lg bg-[#455860]"><ChevronDown size={13} strokeWidth={3.2} /></Cell>
      <Cell className="mb-[12px] ml-[18px] w-4"><SlackIcon /></Cell>
      <div className="relative ml-[18px] flex h-[34px] w-[232px] items-center rounded-t-[10px] bg-[#455860] pb-[6px] pl-2 pr-[8px]">
        <div className="absolute -left-2 bottom-0 h-2 w-2 bg-radial-[at_0%_0%] from-[#2d363d] from-95% to-[#455860]" />
        <div className="absolute -right-2 bottom-0 h-2 w-2 bg-radial-[at_100%_0%] from-[#2d363d] from-95% to-[#455860]" />
        <svg width="16" height="16" viewBox="0 0 16 16" fill="none" stroke="#5fb9cf" strokeWidth=".9">
          <rect width="16" height="16" rx="1.5" fill="#1d2529" stroke="none" />
          <ellipse cx="8" cy="8" rx="2.5" ry="6.5" />
          <ellipse cx="8" cy="8" rx="2.5" ry="6.5" transform="rotate(60 8 8)" />
          <ellipse cx="8" cy="8" rx="2.5" ry="6.5" transform="rotate(120 8 8)" />
        </svg>
        <span className="ml-2 grow text-[11.5px]">React App</span>
        <X size={14} strokeWidth={2.8} />
      </div>
      <Cell className="mb-[12px] ml-[12px] w-4"><Plus size={16} strokeWidth={2} color="#87949b" /></Cell>
      <div className="mb-[7px] ml-auto flex h-[26px] items-center text-[#8f989e]">
        <Cell className="w-[46px]"><Minus size={16} strokeWidth={1.4} /></Cell>
        <Cell className="w-[46px]"><RestoreIcon /></Cell>
        <Cell className="w-[46px]"><X size={16} strokeWidth={1.5} /></Cell>
      </div>
    </div>
    <div className="flex h-[46px] shrink-0 items-center bg-[#455860] text-white">
      <Cell className="ml-[13px] w-[18px]"><ArrowLeft size={18} strokeWidth={2.5} /></Cell>
      <Cell className="ml-[18px] w-[18px]"><ArrowRight size={18} strokeWidth={2} color="#96a3a9" /></Cell>
      <Cell className="ml-[18px] w-[18px]"><RotateCw size={15} strokeWidth={2.8} /></Cell>
      <div className="ml-[17px] flex h-[34px] grow items-center rounded-full bg-[#37454c] pl-1">
        <Cell className="h-[27px] w-[27px] rounded-full bg-[#465860]"><Info size={16} strokeWidth={2} /></Cell>
        <span className="ml-[6px] grow text-[13px] tracking-[0.05px] text-[#b2bbc0]"><span className="text-white">localhost</span>:3000/details/Eye</span>
        <svg width="18" height="16" viewBox="0 0 18 16" fill="none" stroke="#c9d0d3" strokeWidth="1.6">
          <path d="M9 2H1.5v9.5h15V9M13 1v6M10.3 4.5L13 7.200l2.700-2.700M6 14.500h6" />
        </svg>
        <Star size={17} strokeWidth={1.9} color="#d6dcdf" className="ml-[14px] mr-[16px]" />
      </div>
      <Cell className="ml-[17px] w-[20px] pb-[2px]"><ExtensionIcon /></Cell>
      <div className="ml-[15px] h-4 w-[2px] bg-[#33434a]" />
      <svg className="ml-[16px]" width="20" height="20" viewBox="0 0 20 20">
        <circle cx="10" cy="10" r="10" fill="#f4f4ee" />
        <circle cx="10" cy="10" r="8.3" fill="#a08768" />
        <path d="M5.5 13.5c-1.5-7 1-10 4.5-10s6 3 4.5 10L12 16.500H8z" fill="#3f7d20" />
        <path d="M6.5 7.5h7M8 10.5h4M9 13h3" stroke="#1d3b10" strokeWidth="1.5" />
      </svg>
      <Cell className="ml-[17px] mr-[13px] w-[18px]"><EllipsisVertical size={20} strokeWidth={2.9} /></Cell>
    </div>
    <div className="flex h-[35px] shrink-0 items-center border-b border-[#7b8a92] bg-[#475962] pb-[6px] text-[11.5px] text-white">
      <svg className="ml-[19px]" width="14" height="14" viewBox="0 0 14 14" fill="none" stroke="#fff" strokeWidth="1.7">
        <path d="M1 1h4.3v4.3H1zM8.7 1H13v4.3H8.7zM1 8.7h4.3V13H1zM8.7 8.7H13V13H8.7z" />
      </svg>
      <div className="ml-4 mr-[14px] h-4 w-px bg-[#34444b]" />
      <div className="flex gap-4">
        {bookmarks.map((b, i) => <Cell key={i} className="h-4 w-4">{b}</Cell>)}
      </div>
      <div className="relative ml-4">
        <SlackIcon />
        <div className="absolute -right-[2px] -top-[1px] h-[7px] w-[7px] rounded-full border-2 border-[#d8262c] bg-white" />
      </div>
      <span className="ml-[6px] w-[43px] tracking-[-0.2px]">Slack</span>
      <SkypeIcon />
      <span className="ml-[6px] w-[48px] tracking-[-0.1px]">Skype</span>
      <Tile bg="#0b3f4a"><path d="M2.5 6L5 8l1-3.5L8 8l2-3.500L11 8l2.500-2-1 6.500h-9z" fill="#25b5bd" /></Tile>
      <span className="ml-[6px]">Datacenter - IPRoyal</span>
      <div className="ml-auto h-4 w-[2px] bg-[#33434a]" />
      <Folder size={17} strokeWidth={1.7} className="ml-[16px]" color="#c4cccf" />
      <span className="ml-[8px] mr-[15px] tracking-[-0.1px]">All Bookmarks</span>
    </div>
    <header className="flex h-[72px] shrink-0 items-center bg-[#1f2937] pl-4 pr-6 text-white">
      <h1 className="grow pb-[4px] text-[23px] tracking-[-0.2px]">Eagle Vision</h1>
      <button className="h-10 w-[109px] rounded bg-[#3b82f6] pt-px text-[15.5px] tracking-[-0.2px]">Dashboard</button>
      <button className="ml-2 h-10 w-[120px] rounded bg-[#ef4444] pt-px text-[15.5px] tracking-[-0.2px]">DangerZone</button>
    </header>
    <main className="flex grow flex-col pl-8 pt-[34px]">
      <h2 className="h-8 text-[23px] font-bold leading-8 tracking-[-0.1px] text-black">Employee ID: Eye</h2>
      <div className="mt-[30px] flex h-11 items-center text-[15.5px] tracking-[-0.2px]">
        <div className="flex h-11 w-[155px] items-center justify-between border border-[#e5e7eb] pl-[9px] pr-[11px] text-[#111]">
          <span className="pt-px tracking-[0.2px]">12/20/2024</span>
          <svg width="14" height="15" viewBox="0 0 14 15">
            <path d="M1 3h12v11H1z" fill="none" stroke="#111" strokeWidth="1.5" />
            <path d="M1 2h12v3.5H1zM2.8 0h1.5v2.5H2.8zM9.7 0h1.5v2.5H9.7z" fill="#111" />
          </svg>
        </div>
        <button className="ml-4 h-10 w-[111px] rounded bg-[#3b82f6] pt-px text-white">Select Date</button>
        <button className="ml-4 h-10 w-[117px] rounded bg-[#22c55e] pt-px text-white">Screenshots</button>
      </div>
      <Chart />
    </main>
    <footer className="flex h-[54px] shrink-0 items-center justify-center bg-[#1f2937] pt-[2px] text-[15.5px] tracking-[-0.1px] text-white">
      © 2024 Employee Management
    </footer>
  </div>
);

/* ---------- activity chart ---------- */

const values = [0, 0, 0, 0, 0, 0, 0, 0, 0, 0, 0, 98, 119, 36, 0, 0, 0, 0, 0, 0, 0, 0, 0, 0];
const X0 = 56.5, DX = 77.82, TOP = 30, BOT = 347;
const pts = values.map((v, i) => [X0 + i * DX, BOT - (v / 120) * (BOT - TOP)] as const);
const clampY = (y: number) => Math.min(BOT, Math.max(TOP, y));

function spline() {
  const t = 0.3;
  const c = pts.map((p, i) => {
    const a = pts[Math.max(0, i - 1)], b = pts[Math.min(pts.length - 1, i + 1)];
    const d0 = Math.hypot(p[0] - a[0], p[1] - a[1]), d1 = Math.hypot(b[0] - p[0], b[1] - p[1]);
    const s = d0 + d1 || 1;
    const f0 = (t * d0) / s, f1 = (t * d1) / s;
    return {
      p: [p[0] - f0 * (b[0] - a[0]), clampY(p[1] - f0 * (b[1] - a[1]))],
      n: [p[0] + f1 * (b[0] - a[0]), clampY(p[1] + f1 * (b[1] - a[1]))],
    };
  });
  let d = `M${pts[0][0]} ${pts[0][1]}`;
  for (let i = 1; i < pts.length; i++) {
    d += `C${c[i - 1].n[0]} ${c[i - 1].n[1]} ${c[i].p[0]} ${c[i].p[1]} ${pts[i][0]} ${pts[i][1]}`;
  }
  return d;
}

const Chart = () => (
  <svg className="mt-[34px]" width="1870" height="400" viewBox="0 0 1870 400" fontFamily="Liberation Sans, Arial, sans-serif" fontSize="12" fill="#666">
    <rect x="822" y="7.5" width="41" height="12.5" fill="#9dc0fa" stroke="#3b82f6" strokeWidth="3" />
    <text x="868.5" y="17">Activity (Screenshots per Hour)</text>
    {[0, 20, 40, 60, 80, 100, 120].map((v) => {
      const y = Math.floor(BOT - (v / 120) * (BOT - TOP)) + 0.5;
      return (
        <g key={v}>
          <path d={`M48.5 ${y}H${X0 + 23 * DX}`} stroke="#dcdcdc" />
          <text x="45.5" y={y + 3} textAnchor="end">{v}</text>
        </g>
      );
    })}
    {pts.map((p, i) => (
      <g key={i}>
        <path d={`M${Math.floor(p[0]) + 0.5} ${TOP}V${BOT + 8}`} stroke="#dcdcdc" />
        <text x={p[0]} y={BOT + 21.5} textAnchor="middle">{String(i).padStart(2, "0")}</text>
      </g>
    ))}
    <text x="951.5" y="389.5" textAnchor="middle">Hours</text>
    <text transform="translate(15,188.5) rotate(-90)" textAnchor="middle">Screenshots</text>
    <path d={spline()} fill="none" stroke="#3b82f6" strokeWidth="3" />
    {pts.map((p, i) => <circle key={i} cx={p[0]} cy={p[1]} r="3" fill="#3b82f6" fillOpacity=".5" stroke="#3b82f6" />)}
  </svg>
);

export default function App() {
  return (
    <div className="grid h-[1082px] w-[3840px] grid-cols-2 overflow-hidden bg-black font-['Open_Sans','Noto_Sans',sans-serif]">
      <div><Explorer /><Taskbar tray /></div>
      <div><Browser /><Taskbar /></div>
    </div>
  );
}
